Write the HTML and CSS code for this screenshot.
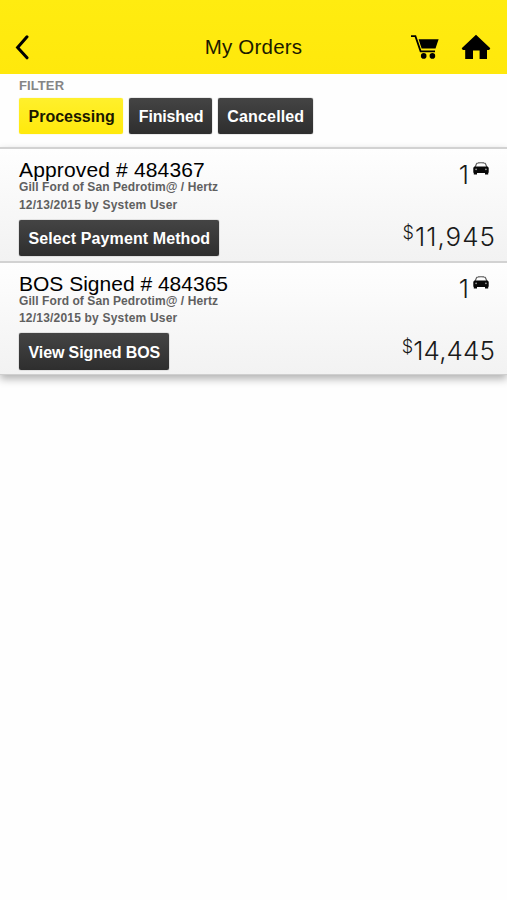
FILE: index.html
```
<!DOCTYPE html>
<html lang="en">

<head>
    <meta charset="UTF-8">
    <meta name="viewport" content="width=device-width, initial-scale=1.0">
    <title>My Orders</title>
    <link rel="stylesheet" href="styles.css">
</head>

<body>
    <!-- shared car icon -->
    <svg class="sprite" width="0" height="0">
        <symbol id="car" viewBox="0 0 16 13">
            <path d="M2.2 5 L3.4 2 Q3.8 1 5 .9 Q8 .5 11 .9 Q12.2 1 12.6 2 L13.8 5" fill="none" stroke="#555" stroke-width="1.1" />
            <path d="M1.4 4.6 H14.6 L15.7 5.8 V10.8 H15.2 V12.6 H12 V11 H4 V12.6 H.8 V10.8 H.3 V5.8 Z" fill="#080808" />
            <circle cx="3.1" cy="7.3" r=".9" fill="#999" />
            <circle cx="12.9" cy="7.3" r=".9" fill="#999" />
        </symbol>
    </svg>

    <header class="header">
        <svg class="back" width="14" height="25" viewBox="0 0 14 25">
            <path d="M12 1.8 L2.6 12.5 L12 22.8" fill="none" stroke="#000" stroke-width="3" stroke-linecap="round" />
        </svg>
        <h1>My Orders</h1>
        <div class="actions">
            <svg width="30" height="25" viewBox="0 0 30 25">
                <path d="M1 2.2 H5.4 L10.6 17.3 H25" fill="none" stroke="#000" stroke-width="1.8" />
                <path d="M8.6 5.3 H28.6 L25.5 14.4 H11.6 Z" />
                <circle cx="13.7" cy="21.9" r="2.8" />
                <circle cx="22.4" cy="21.9" r="2.8" />
            </svg>
            <svg width="30" height="26" viewBox="0 0 30 26">
                <path d="M15 .8 L29.3 14.3 L28.2 16 H26 V25 H18.6 V16.6 H12 V25 H4.2 V16 H1.8 L.7 14.3 Z" />
            </svg>
        </div>
    </header>

    <section class="filter">
        <h2>FILTER</h2>
        <div class="filter-buttons">
            <button class="btn active">Processing</button>
            <button class="btn finished">Finished</button>
            <button class="btn cancelled">Cancelled</button>
        </div>
    </section>

    <main class="orders">
        <article class="order">
            <div class="info">
                <h3 class="approved">Approved # 484367</h3>
                <p class="dealer">Gill Ford of San Pedrotim@ / Hertz</p>
                <p class="date">12/13/2015 by System User</p>
                <button class="btn">Select Payment Method</button>
            </div>
            <div class="totals">
                <div class="count"><span>1</span><svg width="16" height="13"><use href="#car" /></svg></div>
                <div class="price wide"><span class="currency">$</span>11,945</div>
            </div>
        </article>
        <article class="order">
            <div class="info">
                <h3>BOS Signed # 484365</h3>
                <p class="dealer">Gill Ford of San Pedrotim@ / Hertz</p>
                <p class="date">12/13/2015 by System User</p>
                <button class="btn view">View Signed BOS</button>
            </div>
            <div class="totals">
                <div class="count"><span>1</span><svg width="16" height="13"><use href="#car" /></svg></div>
                <div class="price"><span class="currency">$</span>14,445</div>
            </div>
        </article>
    </main>
</body>

</html>
```
FILE: styles.css
```
* {
    box-sizing: border-box;
}

body {
    margin: 0;
    min-height: 100vh;
    background-color: #fefefe;
    font-family: "Liberation Sans", "Helvetica Neue", Helvetica, Arial, sans-serif;
}

h1,
h2,
h3,
p {
    margin: 0;
}

svg {
    display: block;
}

.sprite {
    display: none;
}

/* Header */
.header {
    display: grid;
    grid-template-columns: 1fr auto 1fr;
    align-items: center;
    height: 74px;
    padding: 20px 16px 0 15px;
    background: linear-gradient(#ffec10, #ffe80c);
}

.header h1 {
    padding-left: 1px;
    font-size: 20.5px;
    font-weight: normal;
    letter-spacing: 0.2px;
    color: #1c1a00;
}

.actions {
    display: flex;
    justify-content: flex-end;
    gap: 21px;
}

/* Filter */
.filter {
    height: 73px;
    padding: 4px 19px 0;
}

.filter h2 {
    font-size: 13px;
    line-height: 16px;
    letter-spacing: 0.1px;
    color: #858585;
}

.filter-buttons {
    display: flex;
    gap: 6px;
    margin-top: 4px;
}

.btn {
    display: block;
    height: 36px;
    padding: 2px 8.5px 0 9.5px;
    border: none;
    border-radius: 2px;
    background: linear-gradient(#444, #2e2e2e);
    box-shadow: 0 0 1px #333;
    color: #fff;
    font-family: inherit;
    font-size: 16px;
    font-weight: bold;
    letter-spacing: 0.1px;
    white-space: nowrap;
}

.btn.active {
    background: linear-gradient(#fff02c, #ffe90c);
    box-shadow: 0 0 1px #e8dc50;
    color: #1a1800;
    letter-spacing: 0;
}

.btn.finished {
    letter-spacing: -0.15px;
}

.btn.cancelled {
    letter-spacing: 0.15px;
}

.btn.view {
    letter-spacing: -0.1px;
}

/* Orders */
.orders {
    box-shadow: 0 4px 8px rgba(0, 0, 0, 0.3);
}

.order {
    display: flex;
    justify-content: space-between;
    height: 114px;
    padding: 11px 13px 0 19px;
    border-top: 2px solid #d2d2d2;
    background: linear-gradient(#fefefe, #f2f2f2);
}

.order:last-child {
    border-bottom: 1px solid #cfcfcf;
}

.info h3 {
    font-size: 21px;
    font-weight: normal;
    line-height: 20px;
    color: #000;
}

.info h3.approved {
    letter-spacing: 0.15px;
}

.info p {
    font-size: 12px;
    font-weight: bold;
    line-height: 17px;
    color: #606060;
}

.info .dealer {
    margin-top: -1px;
    letter-spacing: 0.08px;
}

.info .date {
    letter-spacing: 0.2px;
}

.order:first-child .date {
    margin-top: 1px;
}

.info .btn {
    margin-top: 6px;
}

.order:last-child .btn {
    height: 37px;
}

.totals {
    display: flex;
    flex-direction: column;
    align-items: flex-end;
    font-family: Inter, "Helvetica Neue", sans-serif;
    font-weight: 300;
    font-size: 26px;
    line-height: 30px;
    color: #1a1a1a;
}

.count {
    display: flex;
    gap: 4px;
    padding-right: 5px;
}

.count svg {
    margin-top: 2px;
}

.price {
    display: flex;
    margin-top: 32px;
    margin-right: -1px;
    letter-spacing: 0.1px;
}

.price.wide {
    margin-right: -2px;
    letter-spacing: 1px;
}

.currency {
    margin-top: -4px;
    font-size: 18px;
}
```
